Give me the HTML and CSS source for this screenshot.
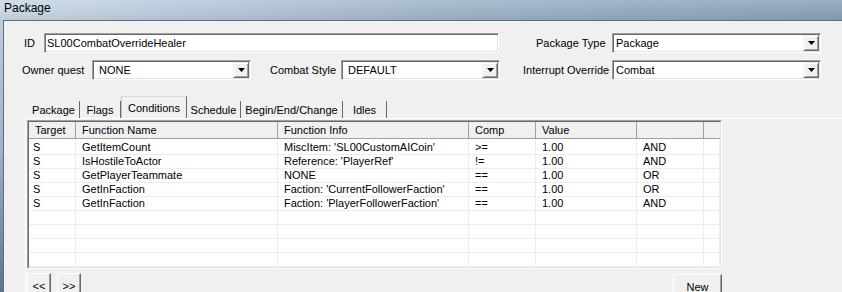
FILE: index.html
```html
<!DOCTYPE html>
<html lang="en">
  <head>
    <meta charset="UTF-8" />
    <title>Package</title>
    <link rel="stylesheet" href="styles.css">
  </head>
  <body>
    <div class="window">
      <div class="titlebar">Package</div>
      <div class="client">
        <!-- top fields -->
        <div class="row row-top">
          <span class="lbl lbl-id">ID</span>
          <div class="field edit-id">SL00CombatOverrideHealer</div>
          <span class="lbl lbl-type">Package Type</span>
          <div class="field combo combo-wide">
            <span>Package</span>
            <span class="drop"><svg width="7" height="4" viewBox="0 0 7 4"><polygon points="0,0 7,0 3.5,4" fill="#000"/></svg></span>
          </div>
        </div>
        <div class="row row-second">
          <span class="lbl lbl-owner">Owner quest</span>
          <div class="field combo combo-mid">
            <span>NONE</span>
            <span class="drop"><svg width="7" height="4" viewBox="0 0 7 4"><polygon points="0,0 7,0 3.5,4" fill="#000"/></svg></span>
          </div>
          <span class="lbl lbl-style">Combat Style</span>
          <div class="field combo combo-mid">
            <span>DEFAULT</span>
            <span class="drop"><svg width="7" height="4" viewBox="0 0 7 4"><polygon points="0,0 7,0 3.5,4" fill="#000"/></svg></span>
          </div>
          <span class="lbl lbl-interrupt">Interrupt Override</span>
          <div class="field combo combo-wide">
            <span>Combat</span>
            <span class="drop"><svg width="7" height="4" viewBox="0 0 7 4"><polygon points="0,0 7,0 3.5,4" fill="#000"/></svg></span>
          </div>
        </div>

        <!-- tabs -->
        <div class="tabs">
          <div class="tab tab-package">Package</div>
          <div class="tab tab-flags">Flags</div>
          <div class="tab tab-conditions active">Conditions</div>
          <div class="tab tab-schedule">Schedule</div>
          <div class="tab tab-begin">Begin/End/Change</div>
          <div class="tab tab-idles">Idles</div>
        </div>

        <div class="panel">
          <div class="list">
            <div class="list-inner">
              <table>
                <thead>
                  <tr>
                    <th class="c-target">Target</th>
                    <th class="c-name">Function Name</th>
                    <th class="c-info">Function Info</th>
                    <th class="c-comp">Comp</th>
                    <th class="c-value">Value</th>
                    <th class="c-op"></th>
                    <th class="c-rest"></th>
                  </tr>
                </thead>
                <tbody>
                  <tr><td class="t">S</td><td>GetItemCount</td><td>MiscItem: 'SL00CustomAICoin'</td><td>&gt;=</td><td>1.00</td><td>AND</td><td></td></tr>
                  <tr><td class="t">S</td><td>IsHostileToActor</td><td>Reference: 'PlayerRef'</td><td>!=</td><td>1.00</td><td>AND</td><td></td></tr>
                  <tr><td class="t">S</td><td>GetPlayerTeammate</td><td>NONE</td><td>==</td><td>1.00</td><td>OR</td><td></td></tr>
                  <tr><td class="t">S</td><td>GetInFaction</td><td>Faction: 'CurrentFollowerFaction'</td><td>==</td><td>1.00</td><td>OR</td><td></td></tr>
                  <tr><td class="t">S</td><td>GetInFaction</td><td>Faction: 'PlayerFollowerFaction'</td><td>==</td><td>1.00</td><td>AND</td><td></td></tr>
                  <tr><td></td><td></td><td></td><td></td><td></td><td></td><td></td></tr>
                  <tr><td></td><td></td><td></td><td></td><td></td><td></td><td></td></tr>
                  <tr><td></td><td></td><td></td><td></td><td></td><td></td><td></td></tr>
                  <tr><td></td><td></td><td></td><td></td><td></td><td></td><td></td></tr>
                </tbody>
              </table>
            </div>
          </div>
          <div class="buttons">
            <button class="btn btn-small">&lt;&lt;</button>
            <button class="btn btn-small btn-next">&gt;&gt;</button>
            <button class="btn btn-new">New</button>
          </div>
        </div>
      </div>
    </div>
  </body>
</html>
```

FILE: styles.css
```css
body {
  margin: 0;
  font-family: "Liberation Sans", Arial, sans-serif;
  font-size: 11px;
  color: #000;
  background-color: #8ea4bc;
  overflow: hidden;
}

.window {
  width: 842px;
  height: 292px;
  display: flex;
  flex-direction: column;
  background: linear-gradient(180deg, #c2d1e1 0%, #9fb3c9 50%, #5c7490 100%);
  overflow: hidden;
}

.titlebar {
  flex: none;
  height: 20px;
  padding-left: 4px;
  font-size: 12px;
  line-height: 17px;
  background:
    linear-gradient(180deg, rgba(255, 255, 255, 0.15), rgba(255, 255, 255, 0) 60%, rgba(0, 0, 0, 0.06)),
    linear-gradient(90deg, #c9d7e5 0%, #b5c6d8 25%, #a2b5ca 50%, #93a9c0 75%, #8aa1b9 100%);
}

.client {
  flex: 1;
  margin-left: 3px;
  padding-top: 12px;
  border-top: 1px solid #5b6e84;
  border-left: 1px solid #5b6e84;
  background-color: #f0f0f0;
  overflow: hidden;
}

/* field rows */
.row {
  display: flex;
  align-items: center;
  height: 20px;
}

.row-top {
  padding-left: 20px;
}

.row-second {
  margin-top: 7px;
  padding-left: 18px;
}

.lbl {
  flex: none;
  white-space: nowrap;
}

.lbl-id { width: 20px; }
.lbl-type { width: 76px; margin-left: 37px; }
.lbl-owner { width: 70px; }
.lbl-style { width: 71px; margin-left: 19px; }
.lbl-interrupt { width: 89px; margin-left: 23px; }

.field {
  flex: none;
  box-sizing: border-box;
  height: 20px;
  display: flex;
  align-items: center;
  padding-left: 2px;
  background-color: #fff;
  border: 1px solid;
  border-color: #a0a0a0 #fff #fff #a0a0a0;
  box-shadow: inset 1px 1px #696969, inset -1px -1px #e3e3e3;
  white-space: nowrap;
}

.edit-id { width: 455px; }
.combo-wide { width: 209px; padding-left: 3px; }
.combo-mid { width: 159px; padding-left: 6px; }

.drop {
  box-sizing: border-box;
  width: 16px;
  height: 16px;
  margin-left: auto;
  margin-right: 1px;
  display: flex;
  align-items: center;
  justify-content: center;
  background-color: #f0f0f0;
  border: 1px solid;
  border-color: #f0f0f0 #696969 #696969 #f0f0f0;
  box-shadow: inset 1px 1px #fff, inset -1px -1px #a0a0a0;
}

.drop svg {
  display: block;
}

/* tabs */
.tabs {
  display: flex;
  align-items: flex-end;
  height: 22px;
  margin-top: 16px;
  padding-left: 24px;
}

.tab {
  box-sizing: border-box;
  height: 17px;
  padding-top: 1px;
  line-height: 16px;
  text-align: center;
  white-space: nowrap;
  border-right: 1px solid #696969;
}

.tab.active {
  height: 22px;
  padding-top: 3px;
  border-left: 1px solid #c0c0c0;
  border-top: 1px solid #dadada;
}

.tab-package { width: 52px; }
.tab-flags { width: 41px; }
.tab-conditions { width: 66px; }
.tab-schedule { width: 54px; }
.tab-begin { width: 102px; }
.tab-idles { width: 44px; }

.panel {
  margin-left: 21px;
  padding: 1px 0 0 1px;
  border-top: 1px solid #fff;
  border-left: 1px solid #fff;
}

/* list view */
.list {
  box-sizing: border-box;
  width: 695px;
  border: 1px solid;
  border-color: #a0a0a0 #fff #fff #a0a0a0;
}

.list-inner {
  height: 145px;
  background-color: #fff;
  border: 1px solid;
  border-color: #696969 #e3e3e3 #e3e3e3 #696969;
  overflow: hidden;
}

table {
  width: 691px;
  table-layout: fixed;
  border-collapse: separate;
  border-spacing: 0;
}

th,
td {
  box-sizing: border-box;
  padding: 0 0 0 6px;
  text-align: left;
  font-weight: normal;
  white-space: nowrap;
  overflow: hidden;
}

th {
  height: 17px;
  line-height: 15px;
  background-color: #f0f0f0;
  border-right: 1px solid #a0a0a0;
  border-bottom: 1px solid #a0a0a0;
}

th.c-rest {
  border-right: none;
}

.c-target { width: 47px; }
.c-name { width: 202px; }
.c-info { width: 191px; }
.c-comp { width: 67px; }
.c-value { width: 101px; }
.c-op { width: 67px; }
.c-rest { width: 16px; }

td {
  height: 14px;
  line-height: 13px;
  border-right: 1px solid #ededed;
  border-bottom: 1px solid #ededed;
}

tbody tr:first-child td {
  height: 16px;
  padding-top: 2px;
}

td.t {
  padding-left: 4px;
}

/* buttons */
.buttons {
  display: flex;
  align-items: flex-start;
  width: 695px;
  margin-top: 4px;
}

.btn {
  box-sizing: border-box;
  height: 23px;
  padding: 4px 0 0;
  font-family: inherit;
  font-size: 11px;
  line-height: 13px;
  color: #000;
  text-align: center;
  background-color: #f0f0f0;
  border: 1px solid;
  border-color: #fff #696969 #696969 #fff;
  box-shadow: inset -1px -1px #a0a0a0;
}

.btn-small { width: 24px; }
.btn-next { margin-left: 6px; }

.btn-new {
  width: 49px;
  margin-left: auto;
  margin-top: 1px;
}
```
